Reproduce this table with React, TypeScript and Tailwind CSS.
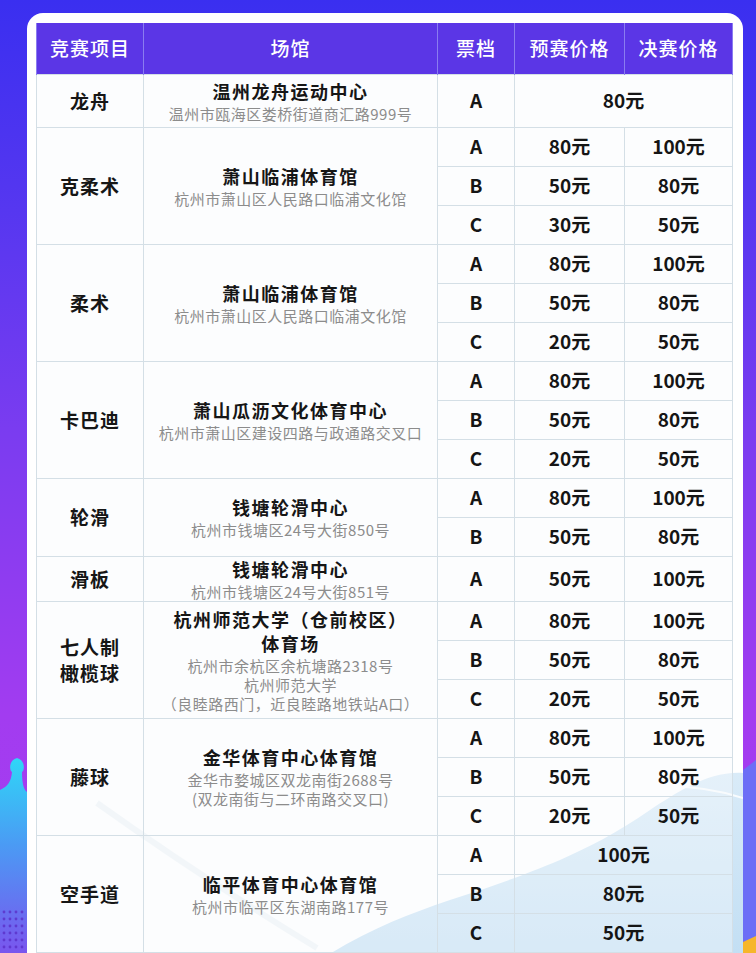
type Group = {
  name: string[];
  venue: string[];
  addr: string[];
  tiers: string[][];
  rowCls: string;
};

const groups: Group[] = [
  { name: ["龙舟"], venue: ["温州龙舟运动中心"], addr: ["温州市瓯海区娄桥街道商汇路999号"], tiers: [["A", "80元"]], rowCls: "h-[53px]" },
  { name: ["克柔术"], venue: ["萧山临浦体育馆"], addr: ["杭州市萧山区人民路口临浦文化馆"], tiers: [["A", "80元", "100元"], ["B", "50元", "80元"], ["C", "30元", "50元"]], rowCls: "h-[39px]" },
  { name: ["柔术"], venue: ["萧山临浦体育馆"], addr: ["杭州市萧山区人民路口临浦文化馆"], tiers: [["A", "80元", "100元"], ["B", "50元", "80元"], ["C", "20元", "50元"]], rowCls: "h-[39px]" },
  { name: ["卡巴迪"], venue: ["萧山瓜沥文化体育中心"], addr: ["杭州市萧山区建设四路与政通路交叉口"], tiers: [["A", "80元", "100元"], ["B", "50元", "80元"], ["C", "20元", "50元"]], rowCls: "h-[39px]" },
  { name: ["轮滑"], venue: ["钱塘轮滑中心"], addr: ["杭州市钱塘区24号大街850号"], tiers: [["A", "80元", "100元"], ["B", "50元", "80元"]], rowCls: "h-[39px]" },
  { name: ["滑板"], venue: ["钱塘轮滑中心"], addr: ["杭州市钱塘区24号大街851号"], tiers: [["A", "50元", "100元"]], rowCls: "h-[44px]" },
  {
    name: ["七人制", "橄榄球"],
    venue: ["杭州师范大学（仓前校区）", "体育场"],
    addr: ["杭州市余杭区余杭塘路2318号", "杭州师范大学", "（良睦路西门，近良睦路地铁站A口）"],
    tiers: [["A", "80元", "100元"], ["B", "50元", "80元"], ["C", "20元", "50元"]],
    rowCls: "h-[39px]",
  },
  { name: ["藤球"], venue: ["金华体育中心体育馆"], addr: ["金华市婺城区双龙南街2688号", "(双龙南街与二环南路交叉口)"], tiers: [["A", "80元", "100元"], ["B", "50元", "80元"], ["C", "20元", "50元"]], rowCls: "h-[39px]" },
  { name: ["空手道"], venue: ["临平体育中心体育馆"], addr: ["杭州市临平区东湖南路177号"], tiers: [["A", "100元"], ["B", "80元"], ["C", "50元"]], rowCls: "h-[39px]" },
];

const cell = "border border-[#d4dfe6] p-0 text-center align-middle bg-[#f7fbfd]/40";
const price = "text-[19px] font-bold text-[#151515]";

const SideArt = () => (
  <>
    <svg className="absolute left-0 top-0" width="27" height="953" viewBox="0 0 27 953">
      <defs>
        <linearGradient id="lg" x1="0" y1="0" x2="0" y2="1">
          <stop offset="0" stopColor="#2fd6f7" />
          <stop offset="0.45" stopColor="#4b9af4" />
          <stop offset="1" stopColor="#7a55ee" />
        </linearGradient>
      </defs>
      <path d="M0 790 C8 786 11 782 12 772 C9 770 9 760 17 758 C25 760 25 770 22 772 C22 784 24 790 27 792 L27 953 L0 953 Z" fill="url(#lg)" />
      {[0, 1, 2, 3, 4, 5].map((r) =>
        [0, 1, 2, 3].map((c) => (
          <circle key={`${r}-${c}`} cx={4 + c * 6} cy={912 + r * 7} r="1.4" fill="#5a2fc8" opacity="0.8" />
        ))
      )}
    </svg>
    <svg className="absolute right-0 top-0" width="13" height="953" viewBox="0 0 13 953">
      <path d="M0 770 L13 760 L13 953 L0 953 Z" fill="#6c6ef6" />
      <path d="M0 942 L13 936 L13 953 L0 953 Z" fill="#f6b62a" />
    </svg>
  </>
);

const Wave = () => (
  <svg className="absolute right-0 top-[730px]" width="716" height="240" viewBox="0 0 716 240">
    <defs>
      <linearGradient id="wv" x1="0" y1="0" x2="0" y2="1">
        <stop offset="0" stopColor="#d9ebf8" />
        <stop offset="1" stopColor="#bfddf3" />
      </linearGradient>
    </defs>
    <path d="M716 30 C680 28 650 50 623 67 C590 90 560 105 533 117 C490 135 460 145 423 157 C370 175 320 195 260 240 L716 240 Z" fill="url(#wv)" />
    <path d="M410 130 C500 70 610 20 716 55" stroke="#ffffff" strokeWidth="2" fill="none" opacity="0.85" />
    <path d="M70 60 C140 110 200 150 290 205" stroke="#e4ecf2" strokeWidth="6" fill="none" opacity="0.6" />
  </svg>
);

export default function App() {
  return (
    <div className="relative h-[953px] w-[756px] overflow-hidden bg-[linear-gradient(180deg,#3a2ff0_0%,#5637f0_22%,#7a3cf0_45%,#a23cf0_75%,#a83bef_100%)] font-['Noto_Sans_CJK_SC','Noto_Sans',sans-serif]">
      <SideArt />
      <div className="relative ml-[27px] mt-[13px] w-[716px] rounded-[16px] bg-white pb-4 pl-[9px] pr-[11px] pt-[10px]">
        <Wave />
        <table className="relative w-[696px] table-fixed border-collapse">
          <colgroup>
            <col className="w-[107px]" />
            <col className="w-[294px]" />
            <col className="w-[77px]" />
            <col className="w-[110px]" />
            <col className="w-[108px]" />
          </colgroup>
          <thead>
            <tr className="h-[51px] bg-[#5b36e6] text-[19px] font-medium tracking-[1px] text-white">
              <th className="border-x border-[#8a7cf0] p-0 font-medium">竞赛项目</th>
              <th className="border-x border-[#8a7cf0] p-0 font-medium">场馆</th>
              <th className="border-x border-[#8a7cf0] p-0 font-medium">票档</th>
              <th className="border-x border-[#8a7cf0] p-0 font-medium">预赛价格</th>
              <th className="border-x border-[#8a7cf0] p-0 font-medium">决赛价格</th>
            </tr>
          </thead>
          <tbody>
            {groups.map((g, gi) =>
              g.tiers.map((t, i) => (
                <tr key={`${gi}-${i}`} className={g.rowCls}>
                  {i === 0 && (
                    <td rowSpan={g.tiers.length} className={cell}>
                      {g.name.map((n) => (
                        <div key={n} className="text-[19px] font-bold leading-[26px] tracking-[1px] text-[#161616]">
                          {n}
                        </div>
                      ))}
                    </td>
                  )}
                  {i === 0 && (
                    <td rowSpan={g.tiers.length} className={cell}>
                      {g.venue.map((v) => (
                        <div key={v} className="text-[18px] font-bold leading-[24px] tracking-[1.5px] text-[#161616]">
                          {v}
                        </div>
                      ))}
                      <div className="mt-[1px]">
                        {g.addr.map((a) => (
                          <div key={a} className="text-[15px] leading-[19px] tracking-[0.5px] text-[#8c8c8c]">
                            {a}
                          </div>
                        ))}
                      </div>
                    </td>
                  )}
                  <td className={`${cell} ${price}`}>{t[0]}</td>
                  {t.length === 2 ? (
                    <td colSpan={2} className={`${cell} ${price}`}>
                      {t[1]}
                    </td>
                  ) : (
                    <>
                      <td className={`${cell} ${price}`}>{t[1]}</td>
                      <td className={`${cell} ${price}`}>{t[2]}</td>
                    </>
                  )}
                </tr>
              ))
            )}
          </tbody>
        </table>
      </div>
    </div>
  );
}
